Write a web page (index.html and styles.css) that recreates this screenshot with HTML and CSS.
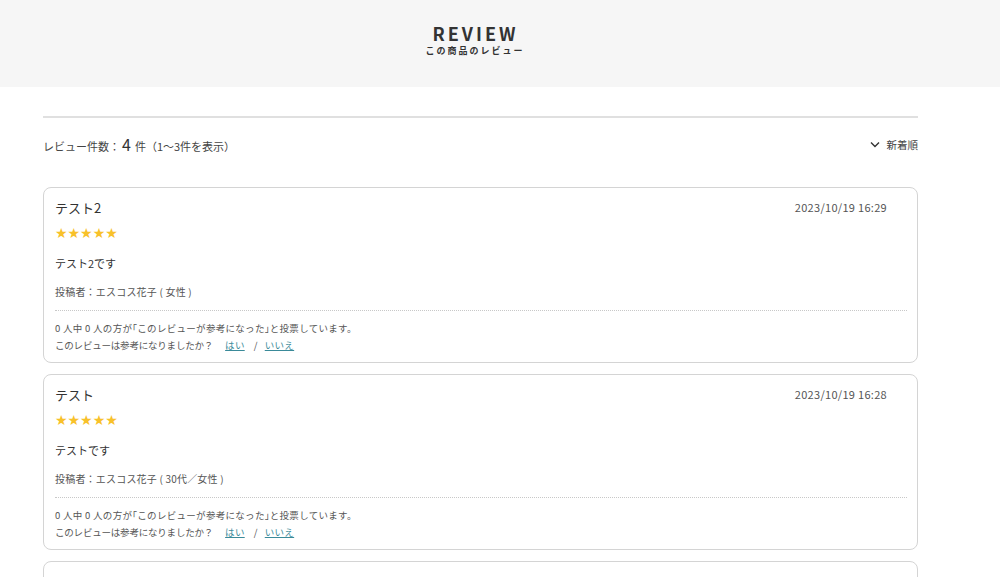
FILE: index.html
```html
<!DOCTYPE html>
<html lang="ja">

<head>
    <meta charset="UTF-8">
    <meta name="viewport" content="width=device-width, initial-scale=1.0">
    <title>REVIEW</title>
    <link rel="stylesheet" href="styles.css">
</head>

<body>
    <div class="review-header">
        <div class="header-inner">
            <h2 class="review-title">REVIEW</h2>
            <p class="review-subtitle">この商品のレビュー</p>
        </div>
    </div>

    <div class="review-wrap">
        <div class="review-count">
            <p class="count-text">レビュー件数：<span class="count-num">4</span>件（1〜3件を表示）</p>
            <div class="sort">
                <svg class="sort-icon" width="10" height="7" viewBox="0 0 10 7"><path d="M1 1.5 L5 5.5 L9 1.5" fill="none" stroke="#333" stroke-width="1.4"/></svg>
                <span>新着順</span>
            </div>
        </div>

        <div class="review-list">
            <div class="review-item">
                <div class="item-head">
                    <p class="item-title">テスト2</p>
                    <p class="item-date">2023/10/19 16:29</p>
                </div>
                <div class="stars">★★★★★</div>
                <p class="item-body">テスト2です</p>
                <p class="item-author">投稿者：エスコス花子 ( 女性 )</p>
                <div class="item-foot">
                    <p>0 人中 0 人の方が｢このレビューが参考になった｣と投票しています。</p>
                    <p><span class="vote-q">このレビューは参考になりましたか？</span><a class="vote-yes" href="#">はい</a><span class="slash">/</span><a class="vote-no" href="#">いいえ</a></p>
                </div>
            </div>

            <div class="review-item">
                <div class="item-head">
                    <p class="item-title">テスト</p>
                    <p class="item-date">2023/10/19 16:28</p>
                </div>
                <div class="stars">★★★★★</div>
                <p class="item-body">テストです</p>
                <p class="item-author">投稿者：エスコス花子 ( 30代／女性 )</p>
                <div class="item-foot">
                    <p>0 人中 0 人の方が｢このレビューが参考になった｣と投票しています。</p>
                    <p><span class="vote-q">このレビューは参考になりましたか？</span><a class="vote-yes" href="#">はい</a><span class="slash">/</span><a class="vote-no" href="#">いいえ</a></p>
                </div>
            </div>

            <!-- next review continues below the fold -->
            <div class="review-item review-item-next"></div>
        </div>
    </div>
</body>

</html>
```

FILE: styles.css
```css
body {
    font-family: "Noto Sans CJK JP", "Noto Sans", sans-serif;
    margin: 0;
    color: #333;
    background-color: #fff;
    overflow: hidden;
}

p {
    margin: 0;
}

.review-header {
    background-color: #f6f6f6;
    height: 87px;
}

.header-inner {
    width: 948px;
    text-align: center;
    padding-top: 22px;
}

.review-title {
    margin: 0;
    font-size: 18px;
    line-height: 22px;
    letter-spacing: 3px;
    font-weight: bold;
    color: #333;
    padding-left: 3px;
}

.review-subtitle {
    font-size: 9px;
    line-height: 14px;
    font-weight: bold;
    letter-spacing: 2px;
    color: #333;
    padding-left: 2px;
}

.review-wrap {
    margin-left: 43px;
    width: 875px;
    margin-top: 29px;
    border-top: 2px solid #e0e0e0;
}

.review-count {
    display: flex;
    justify-content: space-between;
    align-items: center;
    margin-top: 16px;
    height: 20px;
}

.count-text {
    font-size: 11px;
    letter-spacing: 0;
    color: #444;
}

.count-num {
    font-size: 16px;
    margin: 0 4px 0 2px;
    color: #333;
}

.sort {
    display: flex;
    align-items: center;
    font-size: 10.5px;
    color: #444;
}

.sort-icon {
    margin-right: 7px;
}

.review-list {
    margin-top: 33px;
    display: flex;
    flex-direction: column;
    gap: 11px;
}

.review-item {
    border: 1px solid #d4d4d4;
    border-radius: 8px;
    padding: 9px 10px 8px 11px;
}

.review-item-next {
    height: 40px;
}

.item-head {
    display: flex;
    justify-content: space-between;
    align-items: center;
    padding-right: 20px;
    height: 20px;
}

.item-title {
    font-size: 13px;
    letter-spacing: 0;
    color: #333;
}

.item-date {
    font-size: 11px;
    letter-spacing: 0.3px;
    color: #555;
}

.stars {
    margin-top: 8px;
    color: #f8c12a;
    font-size: 14px;
    line-height: 16px;
    letter-spacing: 0;
    font-family: "DejaVu Sans", sans-serif;
}

.item-body {
    margin-top: 14px;
    font-size: 11px;
    line-height: 16px;
    letter-spacing: 0;
}

.item-author {
    margin-top: 13px;
    font-size: 10px;
    line-height: 16px;
    letter-spacing: 0.2px;
    color: #555;
}

.item-foot {
    margin-top: 10px;
    border-top: 1px dotted #c8c8c8;
    padding-top: 9px;
    font-size: 9.5px;
    line-height: 17px;
    letter-spacing: 0.3px;
    color: #555;
}

.vote-q {
    letter-spacing: -0.2px;
}

.item-foot a {
    color: #3a8a99;
    text-decoration: underline;
}

.vote-yes {
    margin-left: 12px;
}

.vote-no {
    margin-left: 7px;
}

.slash {
    margin-left: 9px;
}
```
